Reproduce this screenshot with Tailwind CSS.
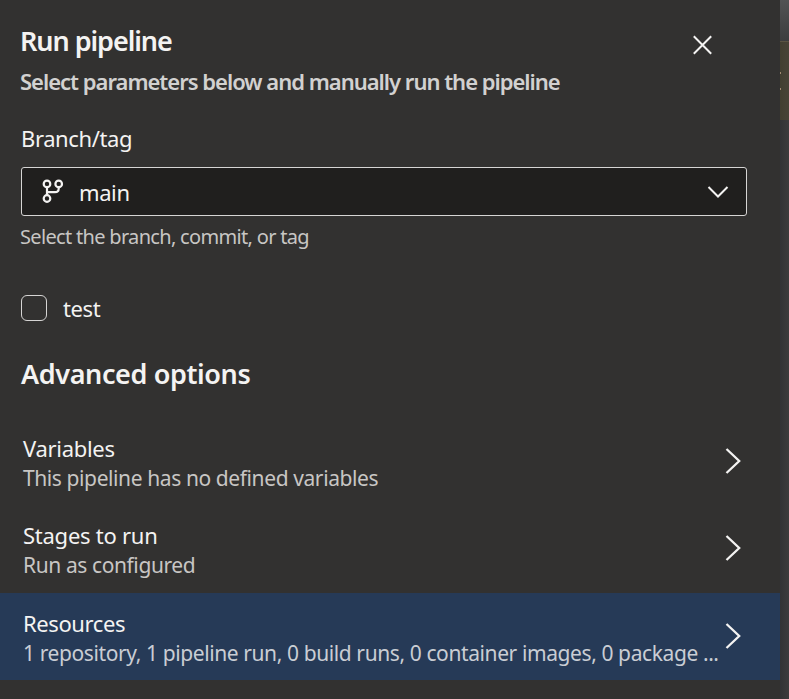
<!DOCTYPE html>
<html lang="en">
<head>
<meta charset="utf-8">
<title>Run pipeline</title>
<script src="https://cdn.jsdelivr.net/npm/@tailwindcss/browser@4"></script>
</head>
<body class="flex h-[699px] w-[789px] overflow-hidden bg-[#323130] font-['Noto_Sans','Open_Sans',sans-serif] text-[#f4f3f2]">
<main class="flex h-full w-[780px] shrink-0 flex-col bg-[#323130]">
  <header class="flex h-[123px] justify-between pt-[22px] pr-[67px] pl-[20px]">
    <div class="whitespace-nowrap">
      <h1 class="h-[44px] pt-px text-[27px] leading-[36px] font-semibold tracking-[-1.05px]">Run pipeline</h1>
      <p class="text-[22px] leading-[30px] font-semibold tracking-[-1px] text-[#d2d1d0]">Select parameters below and manually run the pipeline</p>
    </div>
    <button class="mt-[13px] size-[20px]" aria-label="Close">
      <svg class="size-[20px]" viewBox="0 0 20 20" fill="none" stroke="currentColor" stroke-width="2"><path d="M0.8 1.3L18.2 18.7M18.2 1.3L0.8 18.7"/></svg>
    </button>
  </header>
  <section class="h-[170px] pr-[33px] pl-[21px]">
    <label class="block h-[44px] text-[22px] leading-[30px] tracking-[-0.4px]">Branch/tag</label>
    <div class="flex h-[49px] items-center rounded-[3px] border border-[#d6d5d4] bg-[#201f1e] pr-[17px] pl-[19px]">
      <svg class="h-[26px] w-[24px]" viewBox="0 0 24 26" fill="none" stroke="currentColor" stroke-width="2.2"><circle cx="6" cy="4.9" r="3.3"/><circle cx="17.7" cy="4.9" r="3.3"/><circle cx="6" cy="19.5" r="3.3"/><path d="M6 8.2V16.2M17.7 8.2V9.4Q17.7 13.1 14 13.1H6"/></svg>
      <span class="ml-[14px] flex-1 text-[22px] leading-[30px] tracking-[-0.4px]">main</span>
      <svg class="h-[12px] w-[22px]" viewBox="0 0 22 12" fill="none" stroke="currentColor" stroke-width="2"><path d="M1.5 1L11 10.5L20.5 1"/></svg>
    </div>
    <p class="mt-[7px] -ml-px text-[20px] leading-[28px] tracking-[-0.68px] text-[#c8c6c4]">Select the branch, commit, or tag</p>
  </section>
  <label class="flex h-[62px] pl-[21px]">
    <span class="mt-[2px] size-[26px] rounded-[6px] border border-[#d6d5d4]"></span>
    <span class="ml-[16px] text-[22px] leading-[30px] tracking-[-0.4px]">test</span>
  </label>
  <h2 class="h-[64px] pt-px pl-[21px] text-[27px] leading-[36px] font-semibold tracking-[-0.38px]">Advanced options</h2>
  <nav class="whitespace-nowrap">
    <div class="flex h-[87px] items-center pr-[38px] pl-[23px]">
      <div class="flex-1"><div class="mt-px text-[22px] leading-[30px] tracking-[-0.3px]">Variables</div><div class="text-[21px] leading-[30px] tracking-[-0.4px] text-[#c8c6c4]">This pipeline has no defined variables</div></div>
      <svg class="mt-[-3px] h-[26px] w-[17px]" viewBox="0 0 17 26" fill="none" stroke="currentColor" stroke-width="2.3"><path d="M1.5 1L14.2 13L1.5 25"/></svg>
    </div>
    <div class="flex h-[87px] items-center pr-[38px] pl-[23px]">
      <div class="flex-1"><div class="mt-px text-[22px] leading-[30px] tracking-[-0.25px]">Stages to run</div><div class="text-[21px] leading-[30px] tracking-[-0.4px] text-[#c8c6c4]">Run as configured</div></div>
      <svg class="mt-[-3px] h-[26px] w-[17px]" viewBox="0 0 17 26" fill="none" stroke="currentColor" stroke-width="2.3"><path d="M1.5 1L14.2 13L1.5 25"/></svg>
    </div>
    <div class="flex h-[87px] items-center bg-[#263a57] pr-[38px] pl-[23px]">
      <div class="flex-1"><div class="mt-[3px] text-[22px] leading-[30px] tracking-[-0.4px]">Resources</div><div class="text-[21px] leading-[30px] tracking-[-0.4px] text-[#c9cdd4]">1 repository, 1 pipeline run, 0 build runs, 0 container images, 0 package ...</div></div>
      <svg class="mt-[-2px] h-[26px] w-[17px]" viewBox="0 0 17 26" fill="none" stroke="currentColor" stroke-width="2.3"><path d="M1.5 1L14.2 13L1.5 25"/></svg>
    </div>
  </nav>
</main>
<aside class="flex h-full w-[9px] flex-col bg-linear-to-r from-[#323335] to-[#3c3c3d]">
  <div class="h-[41px] bg-linear-to-b from-[#525354] to-[#3c3d3e]"></div>
  <div class="flex h-[79px] flex-col border-t border-[#5a5443] bg-linear-to-r from-[#423f31] to-[#484437] pt-[30px]">
    <div class="h-[2px] w-px bg-[#a08a70]"></div>
    <div class="mt-[14px] h-[2px] w-px bg-[#a08a70]"></div>
  </div>
</aside>
</body>
</html>
